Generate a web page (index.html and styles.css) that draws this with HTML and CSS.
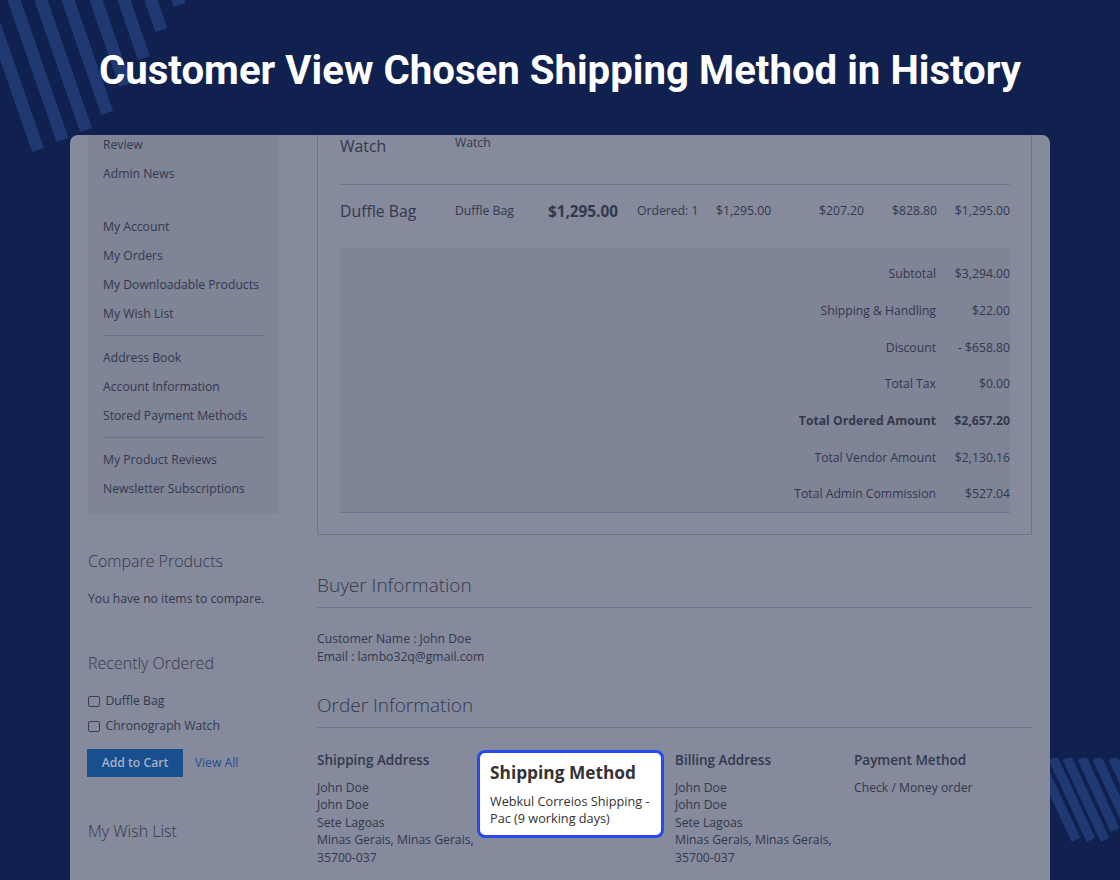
FILE: index.html
```html
<!DOCTYPE html>
<html lang="en">
<head>
<meta charset="utf-8">
<title>Customer View Chosen Shipping Method in History</title>
<link rel="stylesheet" href="styles.css">
</head>
<body>
<div class="page">
  <svg class="deco deco-tl" width="200" height="160" viewBox="0 0 200 160" aria-hidden="true">
    <g class="stripe" stroke-width="12.5">
      <line x1="-17.5" y1="-10" x2="38" y2="150"/>
      <line x1="10.5" y1="-10" x2="62.6" y2="140"/>
      <line x1="37.5" y1="-10" x2="86" y2="130"/>
      <line x1="64.5" y1="-10" x2="107.2" y2="113"/>
      <line x1="92.5" y1="-10" x2="125.5" y2="85"/>
      <line x1="120.5" y1="-10" x2="144" y2="58"/>
      <line x1="147.5" y1="-10" x2="161.4" y2="30"/>
      <line x1="174.5" y1="-10" x2="179.7" y2="5"/>
    </g>
  </svg>
  <svg class="deco deco-br" width="80" height="122" viewBox="1040 758 80 122" aria-hidden="true">
    <g class="stripe" stroke-width="9.5">
      <line x1="1038" y1="758" x2="1076" y2="840"/>
      <line x1="1053" y1="758" x2="1091" y2="840"/>
      <line x1="1067" y1="758" x2="1105" y2="840"/>
      <line x1="1082" y1="758" x2="1115" y2="830"/>
      <line x1="1097" y1="758" x2="1135" y2="840"/>
      <line x1="1113" y1="758" x2="1151" y2="840"/>
    </g>
  </svg>

  <h1 class="title">Customer View Chosen Shipping Method in History</h1>

  <div class="panel">
    <aside class="sidebar">
      <nav class="account-nav">
        <ul class="nav-list">
          <li>Review</li>
          <li>Admin News</li>
        </ul>
        <ul class="nav-list nav-list-spaced">
          <li>My Account</li>
          <li>My Orders</li>
          <li>My Downloadable Products</li>
          <li>My Wish List</li>
        </ul>
        <hr class="nav-divider">
        <ul class="nav-list">
          <li>Address Book</li>
          <li>Account Information</li>
          <li>Stored Payment Methods</li>
        </ul>
        <hr class="nav-divider">
        <ul class="nav-list">
          <li>My Product Reviews</li>
          <li>Newsletter Subscriptions</li>
        </ul>
      </nav>

      <section class="side-block side-compare">
        <h3 class="side-title">Compare Products</h3>
        <p class="side-text">You have no items to compare.</p>
      </section>

      <section class="side-block side-recent">
        <h3 class="side-title">Recently Ordered</h3>
        <ul class="recent-list">
          <li><span class="cb"></span>Duffle Bag</li>
          <li><span class="cb"></span>Chronograph Watch</li>
        </ul>
        <div class="recent-actions">
          <button class="btn-primary" type="button">Add to Cart</button>
          <span class="link">View All</span>
        </div>
      </section>

      <section class="side-block side-wish">
        <h3 class="side-title">My Wish List</h3>
      </section>
    </aside>

    <main class="main">
      <div class="items-box">
        <div class="item-row item-row-first">
          <div class="item-name">Watch</div>
          <div class="item-sku">Watch</div>
        </div>
        <div class="item-row item-row-main">
          <div class="item-name">Duffle Bag</div>
          <div class="item-sku">Duffle Bag</div>
          <div class="item-price">$1,295.00</div>
          <div class="item-cell">Ordered: 1</div>
          <div class="item-cell">$1,295.00</div>
          <div class="item-cell num">$207.20</div>
          <div class="item-cell num">$828.80</div>
          <div class="item-cell num">$1,295.00</div>
        </div>
        <div class="totals">
          <div class="tot-row"><span class="tot-label">Subtotal</span><span class="tot-value">$3,294.00</span></div>
          <div class="tot-row"><span class="tot-label">Shipping &amp; Handling</span><span class="tot-value">$22.00</span></div>
          <div class="tot-row"><span class="tot-label">Discount</span><span class="tot-value">- $658.80</span></div>
          <div class="tot-row"><span class="tot-label">Total Tax</span><span class="tot-value">$0.00</span></div>
          <div class="tot-row tot-strong"><span class="tot-label">Total Ordered Amount</span><span class="tot-value">$2,657.20</span></div>
          <div class="tot-row"><span class="tot-label">Total Vendor Amount</span><span class="tot-value">$2,130.16</span></div>
          <div class="tot-row"><span class="tot-label">Total Admin Commission</span><span class="tot-value">$527.04</span></div>
        </div>
      </div>

      <h2 class="section-title section-buyer">Buyer Information</h2>
      <div class="buyer-info">
        <div>Customer Name : John Doe</div>
        <div>Email : lambo32q@gmail.com</div>
      </div>

      <h2 class="section-title section-order">Order Information</h2>
      <div class="order-cols">
        <div class="order-col">
          <h4 class="col-title">Shipping Address</h4>
          <div class="col-body">John Doe<br>John Doe<br>Sete Lagoas<br>Minas Gerais, Minas Gerais,<br>35700-037</div>
        </div>
        <div class="order-col">
          <div class="method-box">
            <h4 class="method-title">Shipping Method</h4>
            <div class="method-text">Webkul Correios Shipping -<br>Pac (9 working days)</div>
          </div>
        </div>
        <div class="order-col">
          <h4 class="col-title">Billing Address</h4>
          <div class="col-body">John Doe<br>John Doe<br>Sete Lagoas<br>Minas Gerais, Minas Gerais,<br>35700-037</div>
        </div>
        <div class="order-col">
          <h4 class="col-title">Payment Method</h4>
          <div class="col-body">Check / Money order</div>
        </div>
      </div>
    </main>
  </div>
</div>
</body>
</html>
```

FILE: styles.css
```css
html, body {
  margin: 0;
  padding: 0;
}

body {
  background: #10204f;
  font-family: "Open Sans", "Noto Sans", sans-serif;
}

.page {
  position: relative;
  width: 1120px;
  height: 880px;
  overflow: hidden;
  background: #10204f;
}

.deco {
  position: absolute;
  display: block;
}

.deco-tl {
  left: 0;
  top: 0;
}

.deco-br {
  left: 1040px;
  top: 758px;
}

.stripe {
  stroke: #213972;
  stroke-linecap: butt;
}

.title {
  position: relative;
  z-index: 1;
  margin: 0;
  padding-top: 48px;
  font-family: Roboto, "Liberation Sans", sans-serif;
  font-weight: 700;
  font-size: 40.2px;
  line-height: 46px;
  color: #ffffff;
  text-align: center;
}

.panel {
  position: relative;
  z-index: 1;
  box-sizing: border-box;
  margin: 41px 70px 0;
  height: 745px;
  padding: 0 18px;
  display: flex;
  gap: 38px;
  background: #858a9d;
  border-radius: 8px 8px 0 0;
  overflow: hidden;
  color: #33384c;
  font-size: 12.2px;
}

/* ---------- sidebar ---------- */
.sidebar {
  width: 191px;
  flex: none;
}

.account-nav {
  margin-top: -5px;
  padding: 0 15px 11.5px;
  background: #7f8497;
}

.nav-list {
  list-style: none;
  margin: 0;
  padding: 0;
}

.nav-list li {
  height: 29px;
  line-height: 29px;
  white-space: nowrap;
}

.nav-list-spaced {
  margin-top: 23.5px;
}

.nav-divider {
  border: 0;
  border-top: 1px solid #6d7387;
  margin: 7px 0;
  height: 0;
}

.side-title {
  margin: 0;
  font-weight: 300;
  font-size: 16px;
  line-height: 22px;
  white-space: nowrap;
}

.side-compare {
  margin-top: 35.7px;
}

.side-text {
  margin: 18px 0 0;
  line-height: 18px;
}

.side-recent {
  margin-top: 44px;
}

.recent-list {
  list-style: none;
  margin: 18.6px 0 0;
  padding: 0;
  display: flex;
  flex-direction: column;
  gap: 7px;
}

.recent-list li {
  display: flex;
  align-items: center;
  line-height: 18px;
}

.cb {
  box-sizing: border-box;
  width: 11.5px;
  height: 11.5px;
  margin-right: 6px;
  border: 1px solid #3a3f54;
  border-radius: 2px;
  flex: none;
}

.recent-actions {
  display: flex;
  align-items: center;
  gap: 12px;
  margin-top: 14px;
}

.btn-primary {
  width: 95.4px;
  height: 27.4px;
  margin-left: -0.7px;
  padding: 0;
  border: 0;
  border-radius: 0;
  background: #184f8e;
  color: #a7b0c6;
  font-family: "Open Sans", "Noto Sans", sans-serif;
  font-weight: 600;
  font-size: 12.2px;
}

.link {
  color: #1e4f93;
}

.side-wish {
  margin-top: 43.3px;
}

/* ---------- main ---------- */
.main {
  width: 715px;
  flex: none;
}

.items-box {
  border: 1px solid #6f7589;
  border-top: 0;
  padding: 0 21px 20.7px 22px;
}

.item-row {
  display: grid;
  grid-template-columns: 115px 93px 89px 79px 75px 73px 73px 73px;
  align-items: center;
  white-space: nowrap;
}

.item-row-first {
  box-sizing: border-box;
  height: 50px;
  align-items: start;
  border-bottom: 1px solid #6f7589;
}

.item-row-first .item-sku {
  line-height: 16.6px;
}

.item-row-main {
  box-sizing: border-box;
  height: 63.3px;
  padding-top: 14.7px;
  align-content: start;
}

.item-name {
  font-size: 15.8px;
  line-height: 22px;
}

.item-sku,
.item-cell {
  line-height: 22px;
}

.item-price {
  font-weight: 700;
  font-size: 15.3px;
  line-height: 22px;
}

.num {
  text-align: right;
}

.totals {
  background: #7f8497;
  border-bottom: 1px solid #6f7589;
  padding-top: 7px;
}

.tot-row {
  display: grid;
  grid-template-columns: 1fr 74px;
  align-items: center;
  height: 36.7px;
  text-align: right;
  white-space: nowrap;
}

.tot-strong {
  font-weight: 700;
}

.section-title {
  margin: 0;
  padding-bottom: 8.5px;
  border-bottom: 1px solid #6f7589;
  font-weight: 300;
  font-size: 19px;
  line-height: 26px;
}

.section-buyer {
  margin-top: 37.7px;
}

.buyer-info {
  margin-top: 22px;
  line-height: 17.6px;
}

.section-order {
  margin-top: 27.3px;
}

.order-cols {
  display: grid;
  grid-template-columns: 179px 179px 179px 178px;
  margin-top: 22px;
}

.col-title {
  margin: 0 0 9px;
  font-weight: 600;
  font-size: 13.5px;
  line-height: 20px;
  white-space: nowrap;
}

.col-body {
  line-height: 17.4px;
  white-space: nowrap;
}

.method-box {
  box-sizing: border-box;
  width: 187.3px;
  margin-left: -19.3px;
  padding: 8.7px 8px 7.2px 10.3px;
  border: 3px solid #2748ee;
  border-radius: 8px;
  background: #ffffff;
  color: #333333;
}

.method-title {
  margin: 0 0 9.2px;
  font-weight: 700;
  font-size: 17.3px;
  line-height: 22px;
  white-space: nowrap;
}

.method-text {
  font-size: 12.7px;
  line-height: 17.6px;
  white-space: nowrap;
}
```
